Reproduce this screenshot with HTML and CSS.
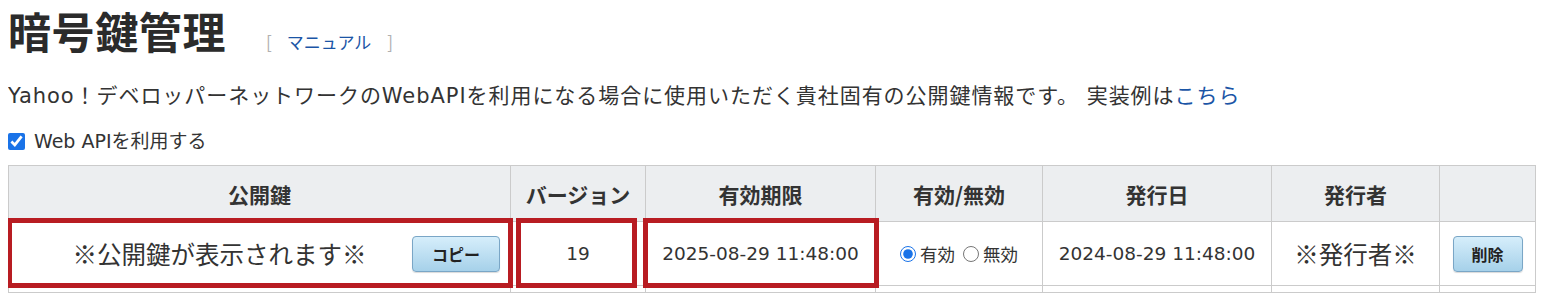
FILE: index.html
```html
<!DOCTYPE html>
<html lang="ja">
<head>
  <meta charset="UTF-8">
  <title>暗号鍵管理</title>
  <link rel="stylesheet" href="styles.css">
</head>
<body>
  <div class="page-title">
    <h1>暗号鍵管理</h1>
    <span class="manual"><span class="bracket">[</span><a href="#">マニュアル</a><span class="bracket">]</span></span>
  </div>
  <p class="lead">Yahoo！デベロッパーネットワークのWebAPIを利用になる場合に使用いただく貴社固有の公開鍵情報です。 実装例は<a href="#">こちら</a></p>
  <label class="use-api"><input type="checkbox" checked> Web APIを利用する</label>

  <div class="key-wrap">
    <table class="key-table">
      <colgroup>
        <col style="width:502px">
        <col style="width:135px">
        <col style="width:230px">
        <col style="width:167px">
        <col style="width:229px">
        <col style="width:168px">
        <col>
      </colgroup>
      <thead>
        <tr>
          <th>公開鍵</th>
          <th>バージョン</th>
          <th>有効期限</th>
          <th>有効/無効</th>
          <th>発行日</th>
          <th>発行者</th>
          <th></th>
        </tr>
      </thead>
      <tbody>
        <tr>
          <td class="key-cell">
            <div class="key-inner">
              <span class="big">※公開鍵が表示されます※</span>
              <button class="blue-btn copy">コピー</button>
            </div>
          </td>
          <td>19</td>
          <td>2025-08-29 11:48:00</td>
          <td class="status">
            <label><input type="radio" name="st" checked>有効</label>
            <label><input type="radio" name="st">無効</label>
          </td>
          <td>2024-08-29 11:48:00</td>
          <td><span class="big">※発行者※</span></td>
          <td><button class="blue-btn del">削除</button></td>
        </tr>
        <tr class="empty">
          <td></td><td></td><td></td><td></td><td></td><td></td><td></td>
        </tr>
      </tbody>
    </table>
    <!-- highlight boxes over the first row -->
    <div class="mark mark-key"></div>
    <div class="mark mark-ver"></div>
    <div class="mark mark-exp"></div>
  </div>
</body>
</html>
```

FILE: styles.css
```css
body { margin: 0 8px; font-family: "DejaVu Sans", "Noto Sans CJK JP", sans-serif; color: #333; background: #fff; overflow: hidden;}
a { color: #1b55a6; text-decoration: none;}
.page-title { display: flex; align-items: baseline; gap: 38px; height: 66px;}
.page-title h1 { margin: 0; font-family: "Noto Sans CJK JP", sans-serif; font-size: 43px; font-weight: bold; line-height: 60px; color: #2b2b2b; letter-spacing: 0.6px;}
.manual { font-family: "Noto Sans CJK JP", sans-serif; font-size: 17px; color: #1b55a6;}
.manual .bracket { color: #b0b0b0; margin: 0 15px 0 2px;}
.manual .bracket + a + .bracket { margin: 0 0 0 16px;}
.lead { margin: 15px 0 0 0; font-size: 21px; line-height: 30px; color: #333; letter-spacing: 0.95px;}
.use-api { display: flex; align-items: center; gap: 9px; margin-top: 18px; font-size: 19px; line-height: 24px;}
.use-api input { width: 17px; height: 17px; margin: 0; accent-color: #1a73e8;}
.key-wrap { position: relative; margin-top: 12px;}
.key-table { width: 1528px; border-collapse: collapse; table-layout: fixed;}
.key-table th, .key-table td { border: 1px solid #cbcbcb; text-align: center; padding: 0 6px; font-size: 18.5px;}
.key-table th { background: #eceef0; height: 55px; font-family: "Noto Sans CJK JP", sans-serif; font-size: 21px; font-weight: bold; color: #333;}
.key-table td { height: 63px; color: #333;}
.key-table tr.empty td { height: 6px;}
.key-table td.key-cell { padding: 0 10px 0 30px;}
.key-inner { display: flex; align-items: center; gap: 12px;}
.key-inner .big { flex: 1; text-align: center;}
.big { font-family: "Noto Sans CJK JP", sans-serif; font-size: 24.5px;}
.status label { font-family: "Noto Sans CJK JP", sans-serif; font-size: 17.5px; display: inline-flex; align-items: center; gap: 4px; margin: 0 1px;}
.status input { margin: 0; width: 16px; height: 16px; accent-color: #1a73e8;}
.blue-btn { height: 36px; border: 1px solid #7aa6c6; border-radius: 4px; background: linear-gradient(#d6eefb, #a6d1ea); font-family: "Noto Sans CJK JP", sans-serif; font-size: 16px; font-weight: bold; color: #222; box-shadow: 0 1px 1px rgba(0,0,0,0.15); cursor: pointer; padding: 0;}
.blue-btn.copy { width: 88px;}
.blue-btn.del { width: 70px;}
.mark { position: absolute; top: 53px; height: 60px; border: 5px solid #b81c22;}
.mark-key { left: -1px; width: 496px;}
.mark-ver { left: 508px; width: 111px;}
.mark-exp { left: 635px; width: 226px;}
```
